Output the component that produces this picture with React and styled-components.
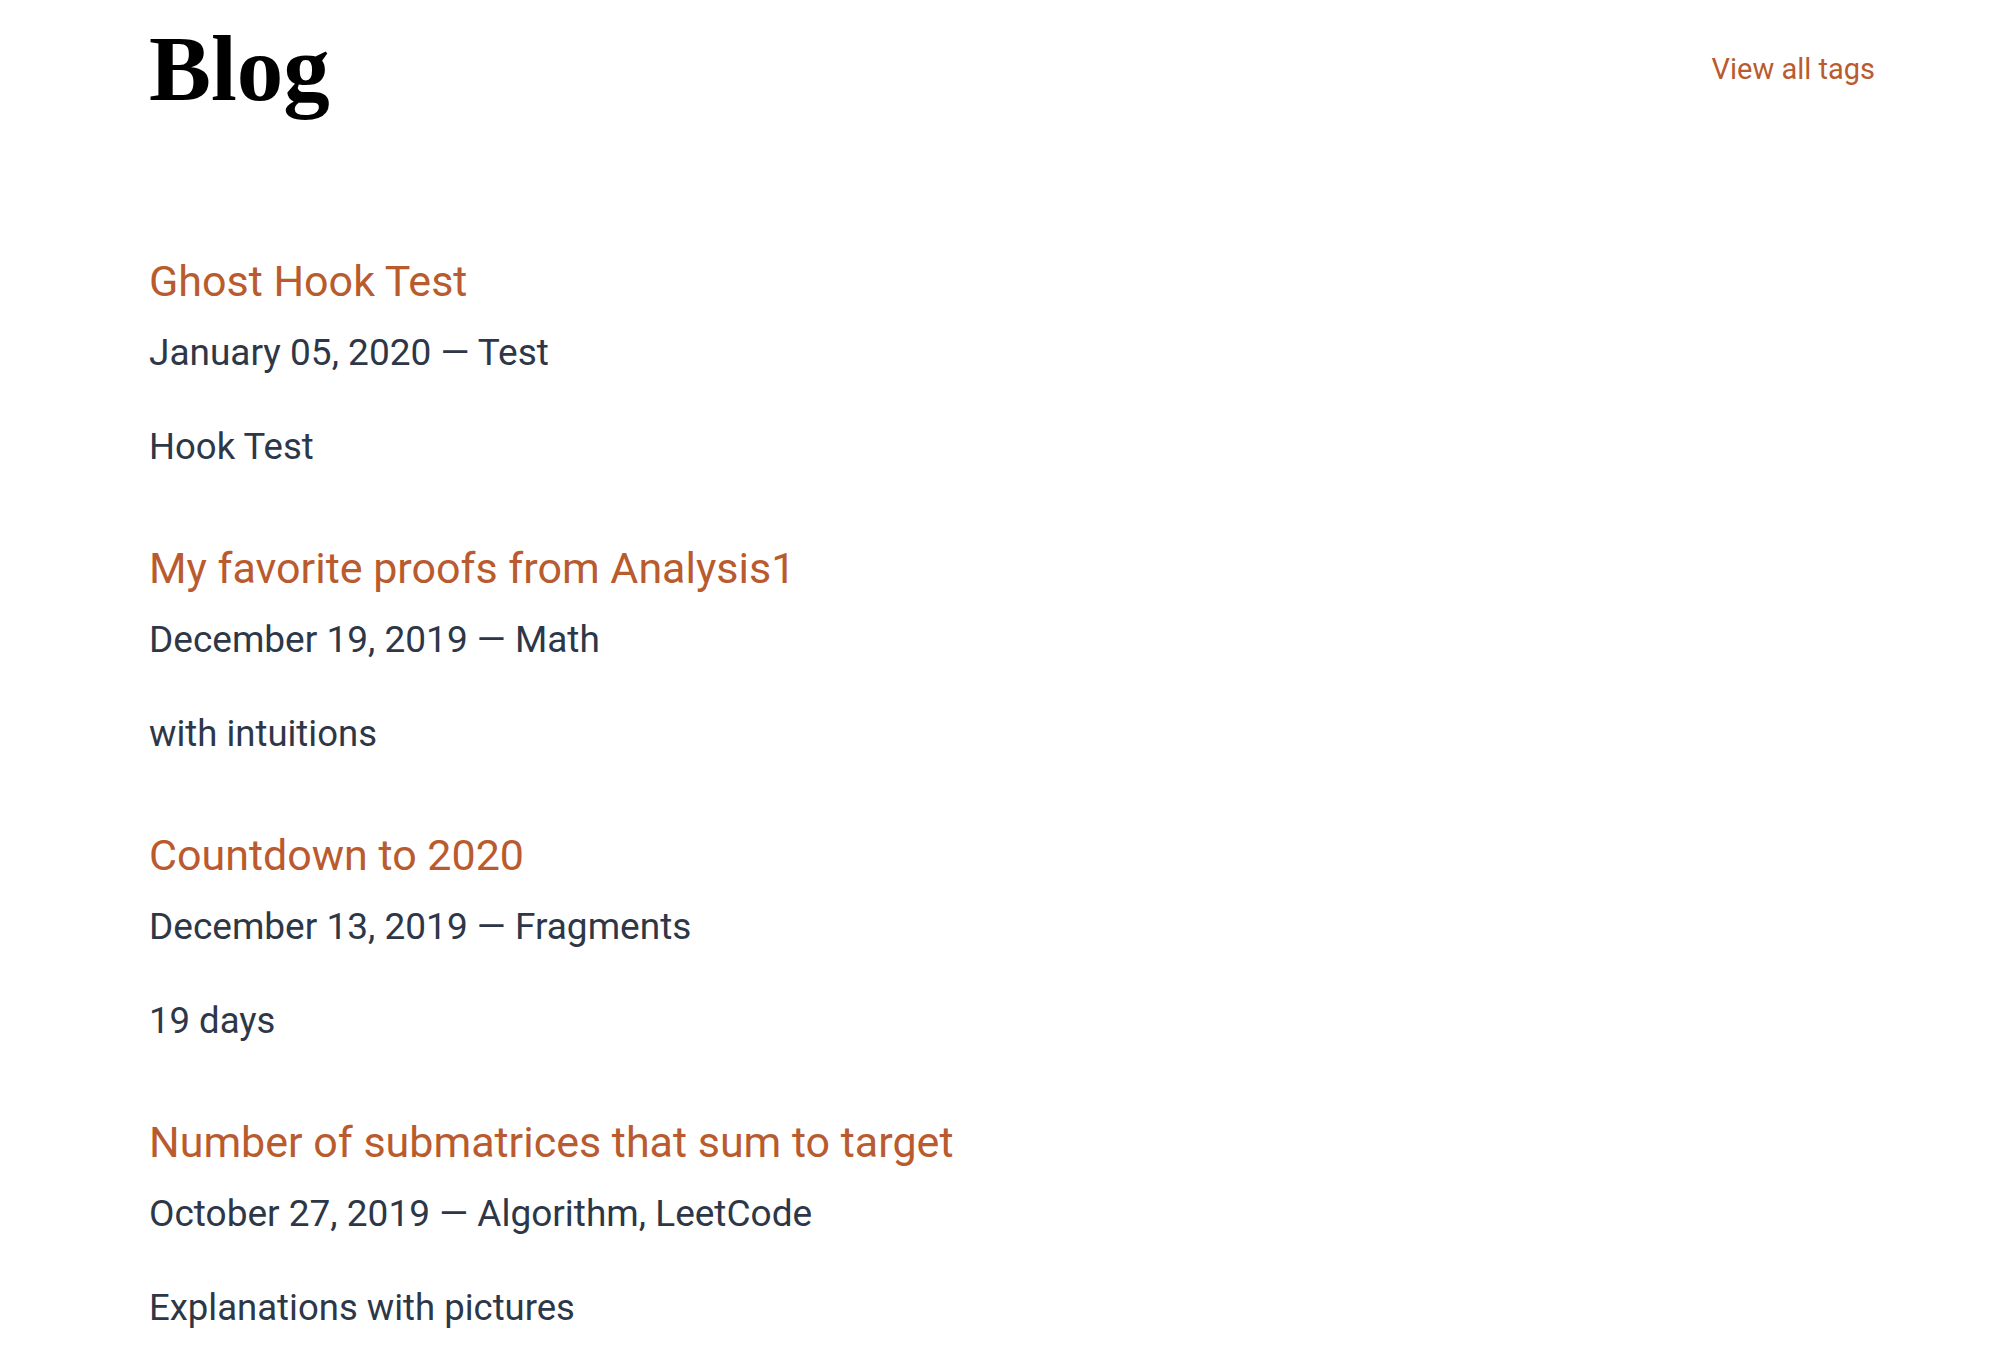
import styled, { createGlobalStyle } from 'styled-components';

const posts = [
  {
    title: 'Ghost Hook Test',
    date: 'January 05, 2020',
    tags: ['Test'],
    excerpt: 'Hook Test'
  },
  {
    title: 'My favorite proofs from Analysis1',
    date: 'December 19, 2019',
    tags: ['Math'],
    excerpt: 'with intuitions'
  },
  {
    title: 'Countdown to 2020',
    date: 'December 13, 2019',
    tags: ['Fragments'],
    excerpt: '19 days'
  },
  {
    title: 'Number of submatrices that sum to target',
    date: 'October 27, 2019',
    tags: ['Algorithm', 'LeetCode'],
    excerpt: 'Explanations with pictures'
  }
];

const GlobalStyle = createGlobalStyle`
  body {
    margin: 0;
    background: #fff;
    font-family: Roboto, "Noto Sans", sans-serif;
    color: #2d3748;
  }
`;

export default function App() {
  return (
    <>
      <GlobalStyle />
      <Page>
        <Header>
          <Title>Blog</Title>
          <TagsLink href="#">View all tags</TagsLink>
        </Header>
        <PostList>
          {posts.map((post) => (
            <Post key={post.title}>
              <PostTitle href="#">{post.title}</PostTitle>
              <PostMeta>
                {post.date} — {post.tags.join(', ')}
              </PostMeta>
              <Excerpt>{post.excerpt}</Excerpt>
            </Post>
          ))}
        </PostList>
      </Page>
    </>
  );
}

const Page = styled.div`
  padding: 22px 131px 60px 149px;
`;

const Header = styled.header`
  display: flex;
  justify-content: space-between;
  align-items: center;
`;

const Title = styled.h1`
  margin: 0;
  font-family: "Liberation Serif", serif;
  font-weight: 700;
  font-size: 93px;
  line-height: 1;
  color: #000;
`;

const TagsLink = styled.a`
  font-size: 29px;
  color: #b95b2e;
  text-decoration: none;
`;

const PostList = styled.div`
  display: flex;
  flex-direction: column;
  gap: 66px;
  margin-top: 137px;
`;

const Post = styled.article`
  display: flex;
  flex-direction: column;
  align-items: flex-start;
`;

const PostTitle = styled.a`
  font-size: 43px;
  line-height: 58px;
  color: #b95b2e;
  text-decoration: none;
`;

const PostMeta = styled.p`
  margin: 17px 0 0;
  font-size: 37px;
  line-height: 52px;
`;

const Excerpt = styled.p`
  margin: 42px 0 0;
  font-size: 36.5px;
  line-height: 52px;
`;
